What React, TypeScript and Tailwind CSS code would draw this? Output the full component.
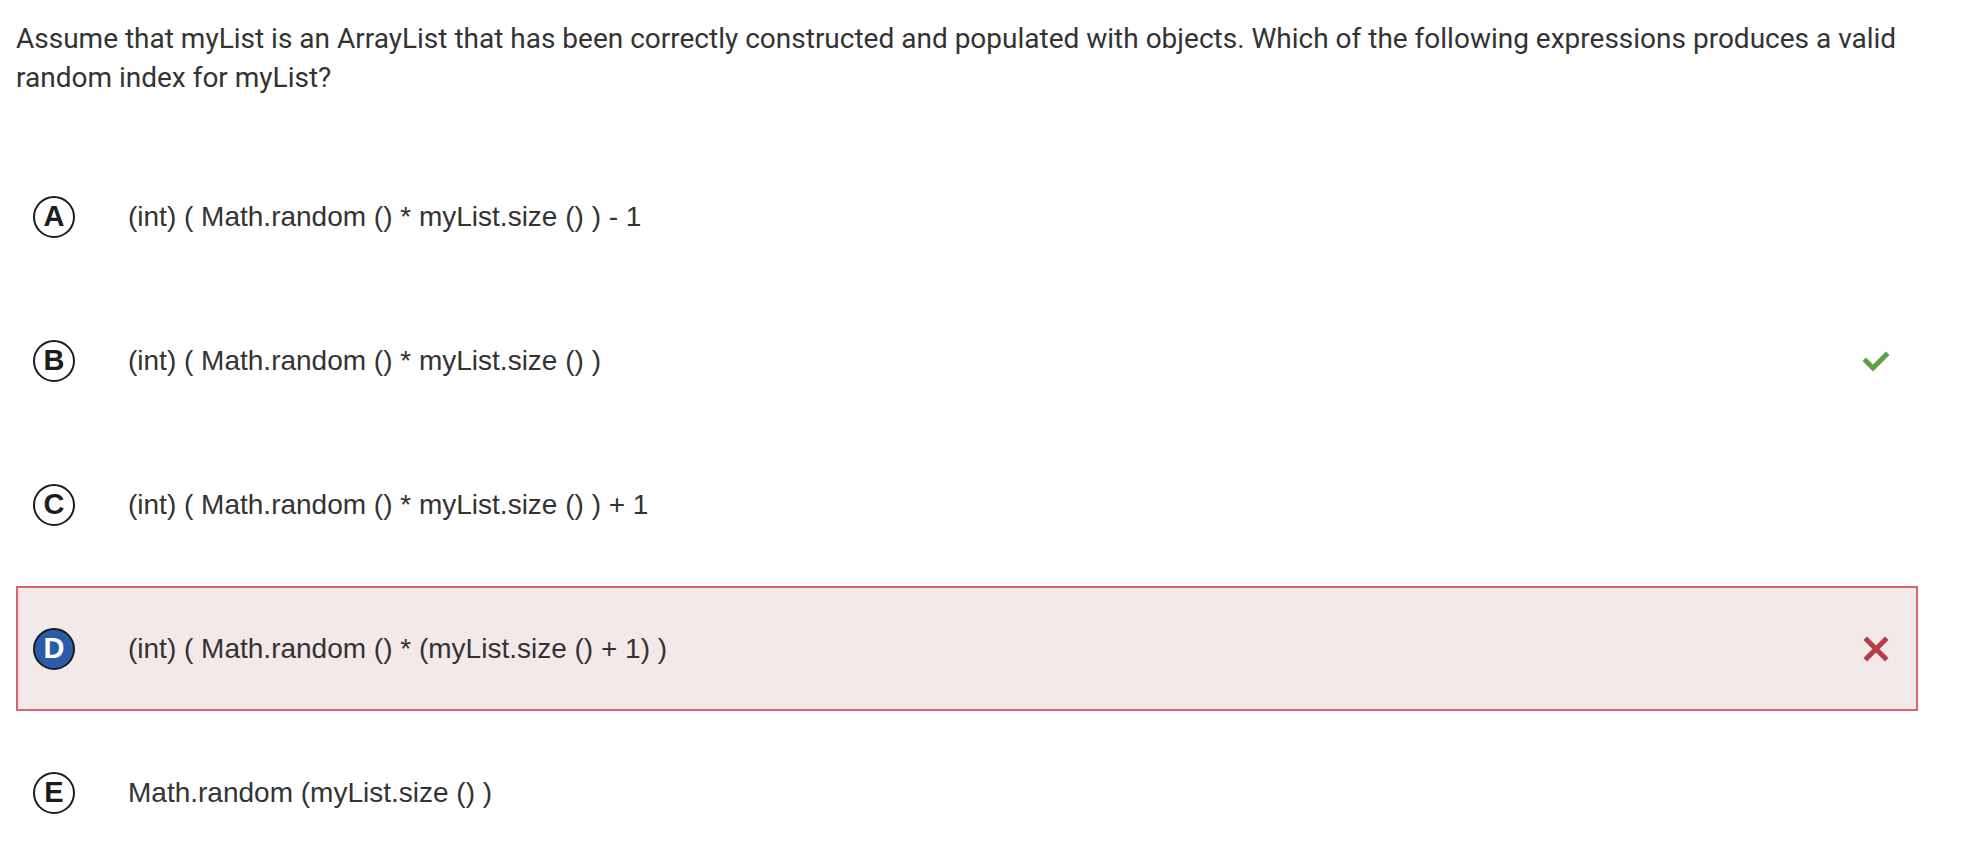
const options = [
  { letter: "A", text: "(int) ( Math.random () * myList.size () ) - 1", state: "none" },
  { letter: "B", text: "(int) ( Math.random () * myList.size () )", state: "correct" },
  { letter: "C", text: "(int) ( Math.random () * myList.size () ) + 1", state: "none" },
  { letter: "D", text: "(int) ( Math.random () * (myList.size () + 1) )", state: "wrong" },
  { letter: "E", text: "Math.random (myList.size () )", state: "none" },
];

function CheckIcon() {
  return (
    <svg width="26" height="22" viewBox="0 0 26 22" fill="none">
      <polyline
        points="3,11 10,18 23,5"
        stroke="#5da245"
        strokeWidth="5"
        strokeLinecap="square"
        strokeLinejoin="miter"
      />
    </svg>
  );
}

function CrossIcon() {
  return (
    <svg width="26" height="26" viewBox="0 0 26 26" fill="none">
      <path d="M4 4 L22 22 M22 4 L4 22" stroke="#b73b48" strokeWidth="5" strokeLinecap="square" />
    </svg>
  );
}

export default function App() {
  return (
    <div className="min-h-screen bg-white px-4 pt-[19px]">
      <p className="w-[1905px] text-[28px] leading-[39px] text-[#333] font-['Roboto',sans-serif]">
        Assume that myList is an ArrayList that has been correctly constructed and populated with objects. Which of the following expressions produces a valid random index for myList?
      </p>

      <div className="mt-[57px] flex w-[1902px] flex-col gap-[19px]">
        {options.map((opt) => {
          const selected = opt.state === "wrong";
          return (
            <div
              key={opt.letter}
              className={
                selected
                  ? "flex h-[125px] items-center border-2 border-[#d9646e] bg-[#f3e9e9] pl-[15px] pr-[27px]"
                  : "flex h-[125px] items-center border-2 border-transparent pl-[15px] pr-[27px]"
              }
            >
              <div
                className={
                  selected
                    ? "flex h-[42px] w-[42px] shrink-0 items-center justify-center rounded-full border-2 border-[#1c1c1c] bg-[#2a5caa] text-white"
                    : "flex h-[42px] w-[42px] shrink-0 items-center justify-center rounded-full border-2 border-[#1c1c1c] bg-white text-[#1c1c1c]"
                }
              >
                <span className="text-[29px] font-bold leading-none font-['Liberation_Sans',Arial,sans-serif]">
                  {opt.letter}
                </span>
              </div>
              <span className="ml-[53px] flex-1 text-[28px] leading-none text-[#333] font-['Liberation_Sans',Arial,sans-serif]">
                {opt.text}
              </span>
              <div className="flex w-[26px] items-center justify-center">
                {opt.state === "correct" && <CheckIcon />}
                {opt.state === "wrong" && <CrossIcon />}
              </div>
            </div>
          );
        })}
      </div>
    </div>
  );
}
